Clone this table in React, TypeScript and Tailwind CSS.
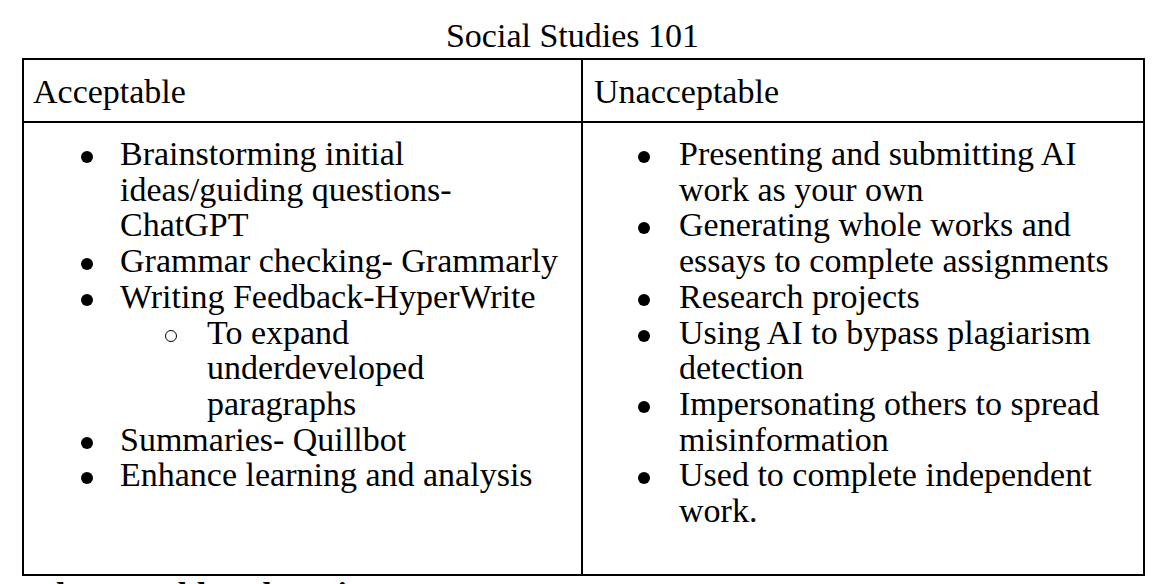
import { Fragment } from 'react';

type Entry = {
	lines: string[];
	sub?: string[][];
};

const acceptable: Entry[] = [
	{ lines: ['Brainstorming initial', 'ideas/guiding questions-', 'ChatGPT'] },
	{ lines: ['Grammar checking- Grammarly'] },
	{ lines: ['Writing Feedback-HyperWrite'], sub: [['To expand', 'underdeveloped', 'paragraphs']] },
	{ lines: ['Summaries- Quillbot'] },
	{ lines: ['Enhance learning and analysis'] },
];

const unacceptable: Entry[] = [
	{ lines: ['Presenting and submitting AI', 'work as your own'] },
	{ lines: ['Generating whole works and', 'essays to complete assignments'] },
	{ lines: ['Research projects'] },
	{ lines: ['Using AI to bypass plagiarism', 'detection'] },
	{ lines: ['Impersonating others to spread', 'misinformation'] },
	{ lines: ['Used to complete independent', 'work.'] },
];

function Lines({ lines }: { lines: string[] }) {
	return (
		<div className="whitespace-nowrap">
			{lines.map((line, i) => (
				<Fragment key={line}>
					{i > 0 && <br />}
					{line}
				</Fragment>
			))}
		</div>
	);
}

function BulletList({ items, right }: { items: Entry[]; right?: boolean }) {
	return (
		<ul>
			{items.map((item) => (
				<li key={item.lines[0]}>
					<div className="flex">
						<div className={`w-[96px] shrink-0 pt-[15px] ${right ? 'pl-[55px]' : 'pl-[57px]'}`}>
							<div className="w-[12px] h-[12px] rounded-full bg-black" />
						</div>
						<Lines lines={item.lines} />
					</div>
					{item.sub?.map((sub) => (
						<div key={sub[0]} className="flex">
							<div className="w-[183px] shrink-0 pt-[15px] pl-[141px]">
								<div className="w-[12px] h-[12px] rounded-full border-[1.5px] border-black" />
							</div>
							<Lines lines={sub} />
						</div>
					))}
				</li>
			))}
		</ul>
	);
}

export default function App() {
	return (
		<div className="w-[1167px] h-[584px] overflow-hidden bg-white text-black font-['Liberation_Serif','Times_New_Roman',serif] text-[34px] leading-[35.7px]">
			<div className="pt-[18px] w-[1145px] text-center h-[54px] leading-[36px]">Social Studies 101</div>

			<div className="mt-[4px] ml-[22px] w-[1123px] border-2 border-black">
				<div className="flex h-[63px] border-b-2 border-black">
					<div className="w-[559px] border-r-2 border-black pl-[9px] pt-[14px]">Acceptable</div>
					<div className="flex-1 pl-[11px] pt-[14px]">Unacceptable</div>
				</div>
				<div className="flex h-[451px]">
					<div className="w-[559px] border-r-2 border-black pt-[13px]">
						<BulletList items={acceptable} />
					</div>
					<div className="flex-1 pt-[13px]">
						<BulletList items={unacceptable} right />
					</div>
				</div>
			</div>

			<div className="pl-[22px] pt-[4px] leading-[30px] font-bold">When would we be using AI?</div>
		</div>
	);
}
